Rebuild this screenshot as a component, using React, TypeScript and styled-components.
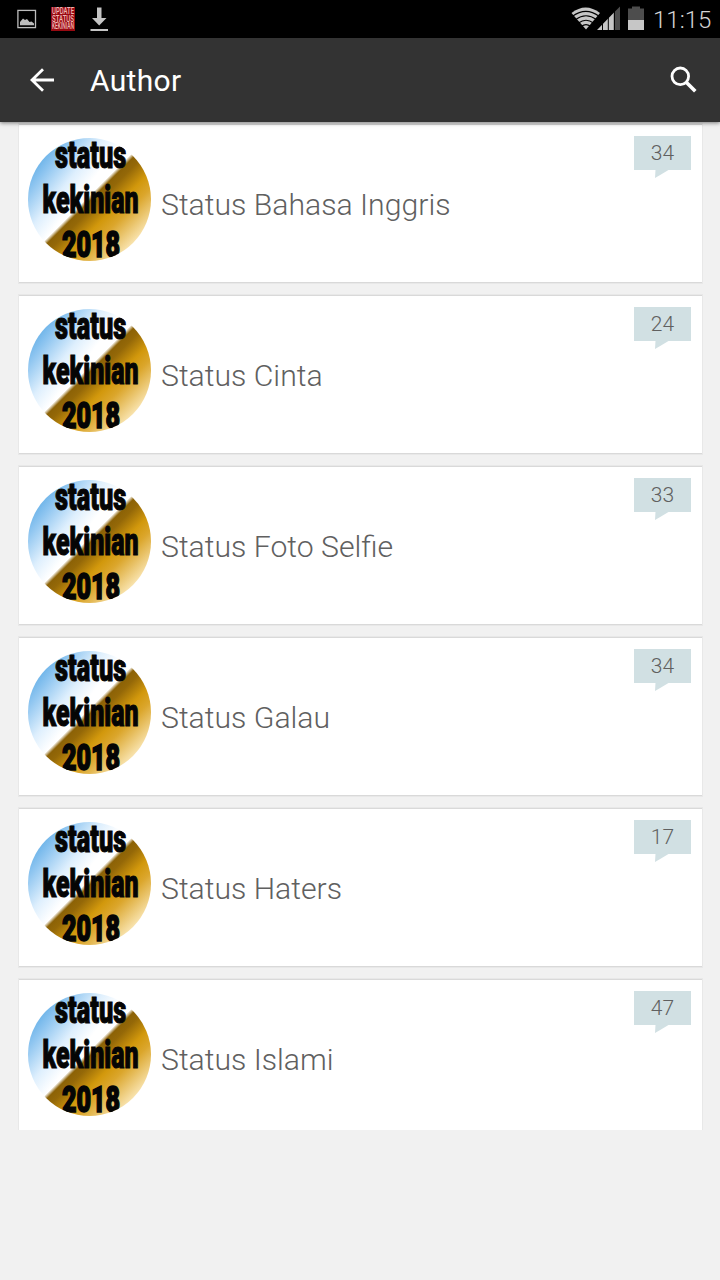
import React from "react";
import styled, { createGlobalStyle } from "styled-components";

const GlobalStyle = createGlobalStyle`
  * { box-sizing: border-box; }
  html, body { margin: 0; padding: 0; }
  body { background: #f1f1f1; font-family: Roboto, "Liberation Sans", sans-serif; overflow: hidden; }
  svg { display: block; }
`;

const Screen = styled.div`
  width: 720px;
  height: 1280px;
  display: flex;
  flex-direction: column;
  overflow: hidden;
  background: #f1f1f1;
`;

const StatusBar = styled.div`
  height: 38px;
  flex: none;
  display: flex;
  justify-content: space-between;
  background: #000;
`;

const Clock = styled.span`
  width: 67px;
  font-size: 24px;
  line-height: 40px;
  font-weight: 300;
  color: #d4d4d4;
  white-space: nowrap;
`;

const StatusGroup = styled.div`
  display: flex;
`;

const AppBar = styled.header`
  height: 84px;
  flex: none;
  display: flex;
  align-items: center;
  padding: 0 20px 0 26px;
  background: #333;
  box-shadow: 0 1px 4px rgba(0, 0, 0, 0.5);
  position: relative;
  z-index: 1;
`;

const Heading = styled.h1`
  margin: 1px 0 0 32px;
  flex: 1;
  font-size: 30px;
  line-height: 40px;
  font-weight: 400;
  letter-spacing: 0.3px;
  color: #fff;
`;

const List = styled.main`
  height: 1008px;
  flex: none;
  overflow: hidden;
  padding: 1px 17px 0 18px;
  display: flex;
  flex-direction: column;
  gap: 10px;
`;

const Card = styled.article`
  height: 161px;
  flex: none;
  display: flex;
  align-items: flex-start;
  padding: 14px 12px 0 9px;
  background: #fff;
  border: 1px solid #e8e8e8;
  box-shadow: inset 0 1px #d9d9d9, inset 0 -1px #d9d9d9;
`;

const Title = styled.h2`
  flex: 1;
  margin: 47px 0 0 10px;
  font-size: 30.2px;
  line-height: 40px;
  font-weight: 300;
  color: #606060;
  white-space: nowrap;
`;

const Bubble = styled.div`
  width: 57px;
  height: 34px;
  margin: -2px -1px 0 0;
  background: #d1e0e3;
  color: #606060;
  font-size: 21px;
  line-height: 34px;
  font-weight: 300;
  text-align: center;
  position: relative;
`;

const Tail = styled.svg`
  position: absolute;
  left: 20px;
  top: 34px;
`;

function PictureIcon() {
  return (
    <svg width="44" height="38" viewBox="0 0 44 38">
      <rect x="17.900" y="10.400" width="17.600" height="17.200" fill="none" stroke="#bdbdbd" strokeWidth="1.300" />
      <path d="M20 25.300v-3.300l3-3.500 2 1.500 2-1 2.500 3 2-.5 2.500 2v1.800z" fill="#bdbdbd" />
    </svg>
  );
}

function BadgeIcon() {
  return (
    <svg width="40" height="38" viewBox="0 0 40 38" fontFamily="Roboto, sans-serif" fontWeight="500" fontSize="8.600" fill="#f0b8b4">
      <rect x="7" y="7" width="24" height="24" fill="#980a12" />
      <g transform="translate(8 0) scale(0.700 1)">
        <text x="0" y="14.200" textLength="31.400" lengthAdjust="spacingAndGlyphs">UPDATE</text>
        <text x="0" y="21.800" textLength="31.400" lengthAdjust="spacingAndGlyphs">STATUS</text>
        <text x="0" y="29.300" textLength="31.400" lengthAdjust="spacingAndGlyphs">KEKINIAN</text>
      </g>
    </svg>
  );
}

function DownloadIcon() {
  return (
    <svg width="30" height="38" viewBox="0 0 30 38" fill="#c4c4c4">
      <path d="M13 7.500h4.500v10.500h5L15.200 25.500 8 18h5zM6.500 29h17.500v2H6.500z" />
    </svg>
  );
}

function WifiIcon() {
  return (
    <svg width="26" height="38" viewBox="571 0 26 38" overflow="visible">
      <path d="M571.500 13Q585.500 2 600 13L586 29.500z" fill="#c6c6c6" />
      <g fill="none" stroke="#000" strokeWidth="1.100">
        <path d="M572.500 16.200Q586 6.500 599 16.200" />
        <path d="M575.500 19.600Q586 12 596.500 19.600" />
        <path d="M578.500 23Q586 17.500 593.500 23" />
        <path d="M581.500 26.300Q586 23 590.500 26.300" />
      </g>
    </svg>
  );
}

function SignalIcon() {
  return (
    <svg width="26" height="38" viewBox="597 0 26 38">
      <path d="M620 6.500V30h-5.500V12z" fill="#4d4d4d" />
      <path d="M614 12.500V30h-17z" fill="#c6c6c6" />
      <path d="M602.500 20v10M608.300 15v15M614.300 10v20" stroke="#000" strokeWidth="1" />
    </svg>
  );
}

function BatteryIcon() {
  return (
    <svg width="30" height="38" viewBox="623 0 30 38">
      <path d="M628 8.500h4V6.500h8v2h4V20h-16z" fill="#4d4d4d" />
      <path d="M628 20h16v10h-16z" fill="#c6c6c6" />
    </svg>
  );
}

function BackIcon() {
  return (
    <svg width="32" height="32" viewBox="0 0 32 32" fill="none" stroke="#fff" strokeWidth="2.800">
      <path d="M28 16H6M17 5.200L6 16l11 10.800" />
    </svg>
  );
}

function SearchIcon() {
  return (
    <svg width="32" height="32" viewBox="0 0 32 32" fill="none" stroke="#fff">
      <circle cx="12.300" cy="12.300" r="8.300" strokeWidth="2.800" />
      <path d="M18 18l9.300 9.300" strokeWidth="3.600" />
    </svg>
  );
}

function Avatar({ id }: { id: number }) {
  const sky = `sky${id}`;
  const gold = `gold${id}`;
  const clip = `clip${id}`;
  return (
    <svg width="123" height="123" viewBox="0 0 123 123">
      <defs>
        <linearGradient id={sky} gradientUnits="userSpaceOnUse" x1="4" y1="20" x2="52" y2="58">
          <stop offset="0" stopColor="#56a8e4" />
          <stop offset="0.300" stopColor="#8ec5f0" />
          <stop offset="0.700" stopColor="#deeffd" />
          <stop offset="1" stopColor="#fff" />
        </linearGradient>
        <linearGradient id={gold} gradientUnits="userSpaceOnUse" x1="59.500" y1="59.500" x2="106" y2="106">
          <stop offset="0" stopColor="#8c6206" stopOpacity="0" />
          <stop offset="0.060" stopColor="#8c6206" />
          <stop offset="0.160" stopColor="#946808" />
          <stop offset="0.400" stopColor="#d2980c" />
          <stop offset="0.580" stopColor="#dba62c" />
          <stop offset="1" stopColor="#fae6b4" />
        </linearGradient>
        <clipPath id={clip}>
          <circle cx="61.500" cy="61.500" r="61.500" />
        </clipPath>
      </defs>
      <g clipPath={`url(#${clip})`}>
        <rect width="123" height="123" fill={`url(#${sky})`} />
        <path d="M123 -4v127H-4z" fill={`url(#${gold})`} />
        <g fontFamily="Roboto, sans-serif" fontWeight="900" fontSize="38" fill="#050505" stroke="#050505" strokeWidth="1.100">
          <text transform="translate(27 30) scale(0.630 1)" textLength="113" lengthAdjust="spacingAndGlyphs">status</text>
          <text transform="translate(14.500 74.500) scale(0.630 1)" textLength="152.500" lengthAdjust="spacingAndGlyphs">kekinian</text>
          <text transform="translate(34 118.500) scale(0.680 1)" fontSize="36" strokeWidth="1.600" textLength="85.500" lengthAdjust="spacingAndGlyphs">2018</text>
        </g>
      </g>
    </svg>
  );
}

const categories = [
  { name: "Status Bahasa Inggris", count: 34 },
  { name: "Status Cinta", count: 24 },
  { name: "Status Foto Selfie", count: 33 },
  { name: "Status Galau", count: 34 },
  { name: "Status Haters", count: 17 },
  { name: "Status Islami", count: 47 },
];

export default function App() {
  return (
    <Screen>
      <GlobalStyle />
      <StatusBar>
        <StatusGroup>
          <PictureIcon />
          <BadgeIcon />
          <DownloadIcon />
        </StatusGroup>
        <StatusGroup>
          <WifiIcon />
          <SignalIcon />
          <BatteryIcon />
          <Clock>11:15</Clock>
        </StatusGroup>
      </StatusBar>
      <AppBar>
        <BackIcon />
        <Heading>Author</Heading>
        <SearchIcon />
      </AppBar>
      <List>
        {categories.map((c, i) => (
          <Card key={c.name}>
            <Avatar id={i} />
            <Title>{c.name}</Title>
            <Bubble>
              {c.count}
              <Tail width="16" height="9" viewBox="0 0 16 9" fill="#d1e0e3">
                <path d="M1.500 0h13L7 4.500 1 8z" />
              </Tail>
            </Bubble>
          </Card>
        ))}
      </List>
    </Screen>
  );
}
